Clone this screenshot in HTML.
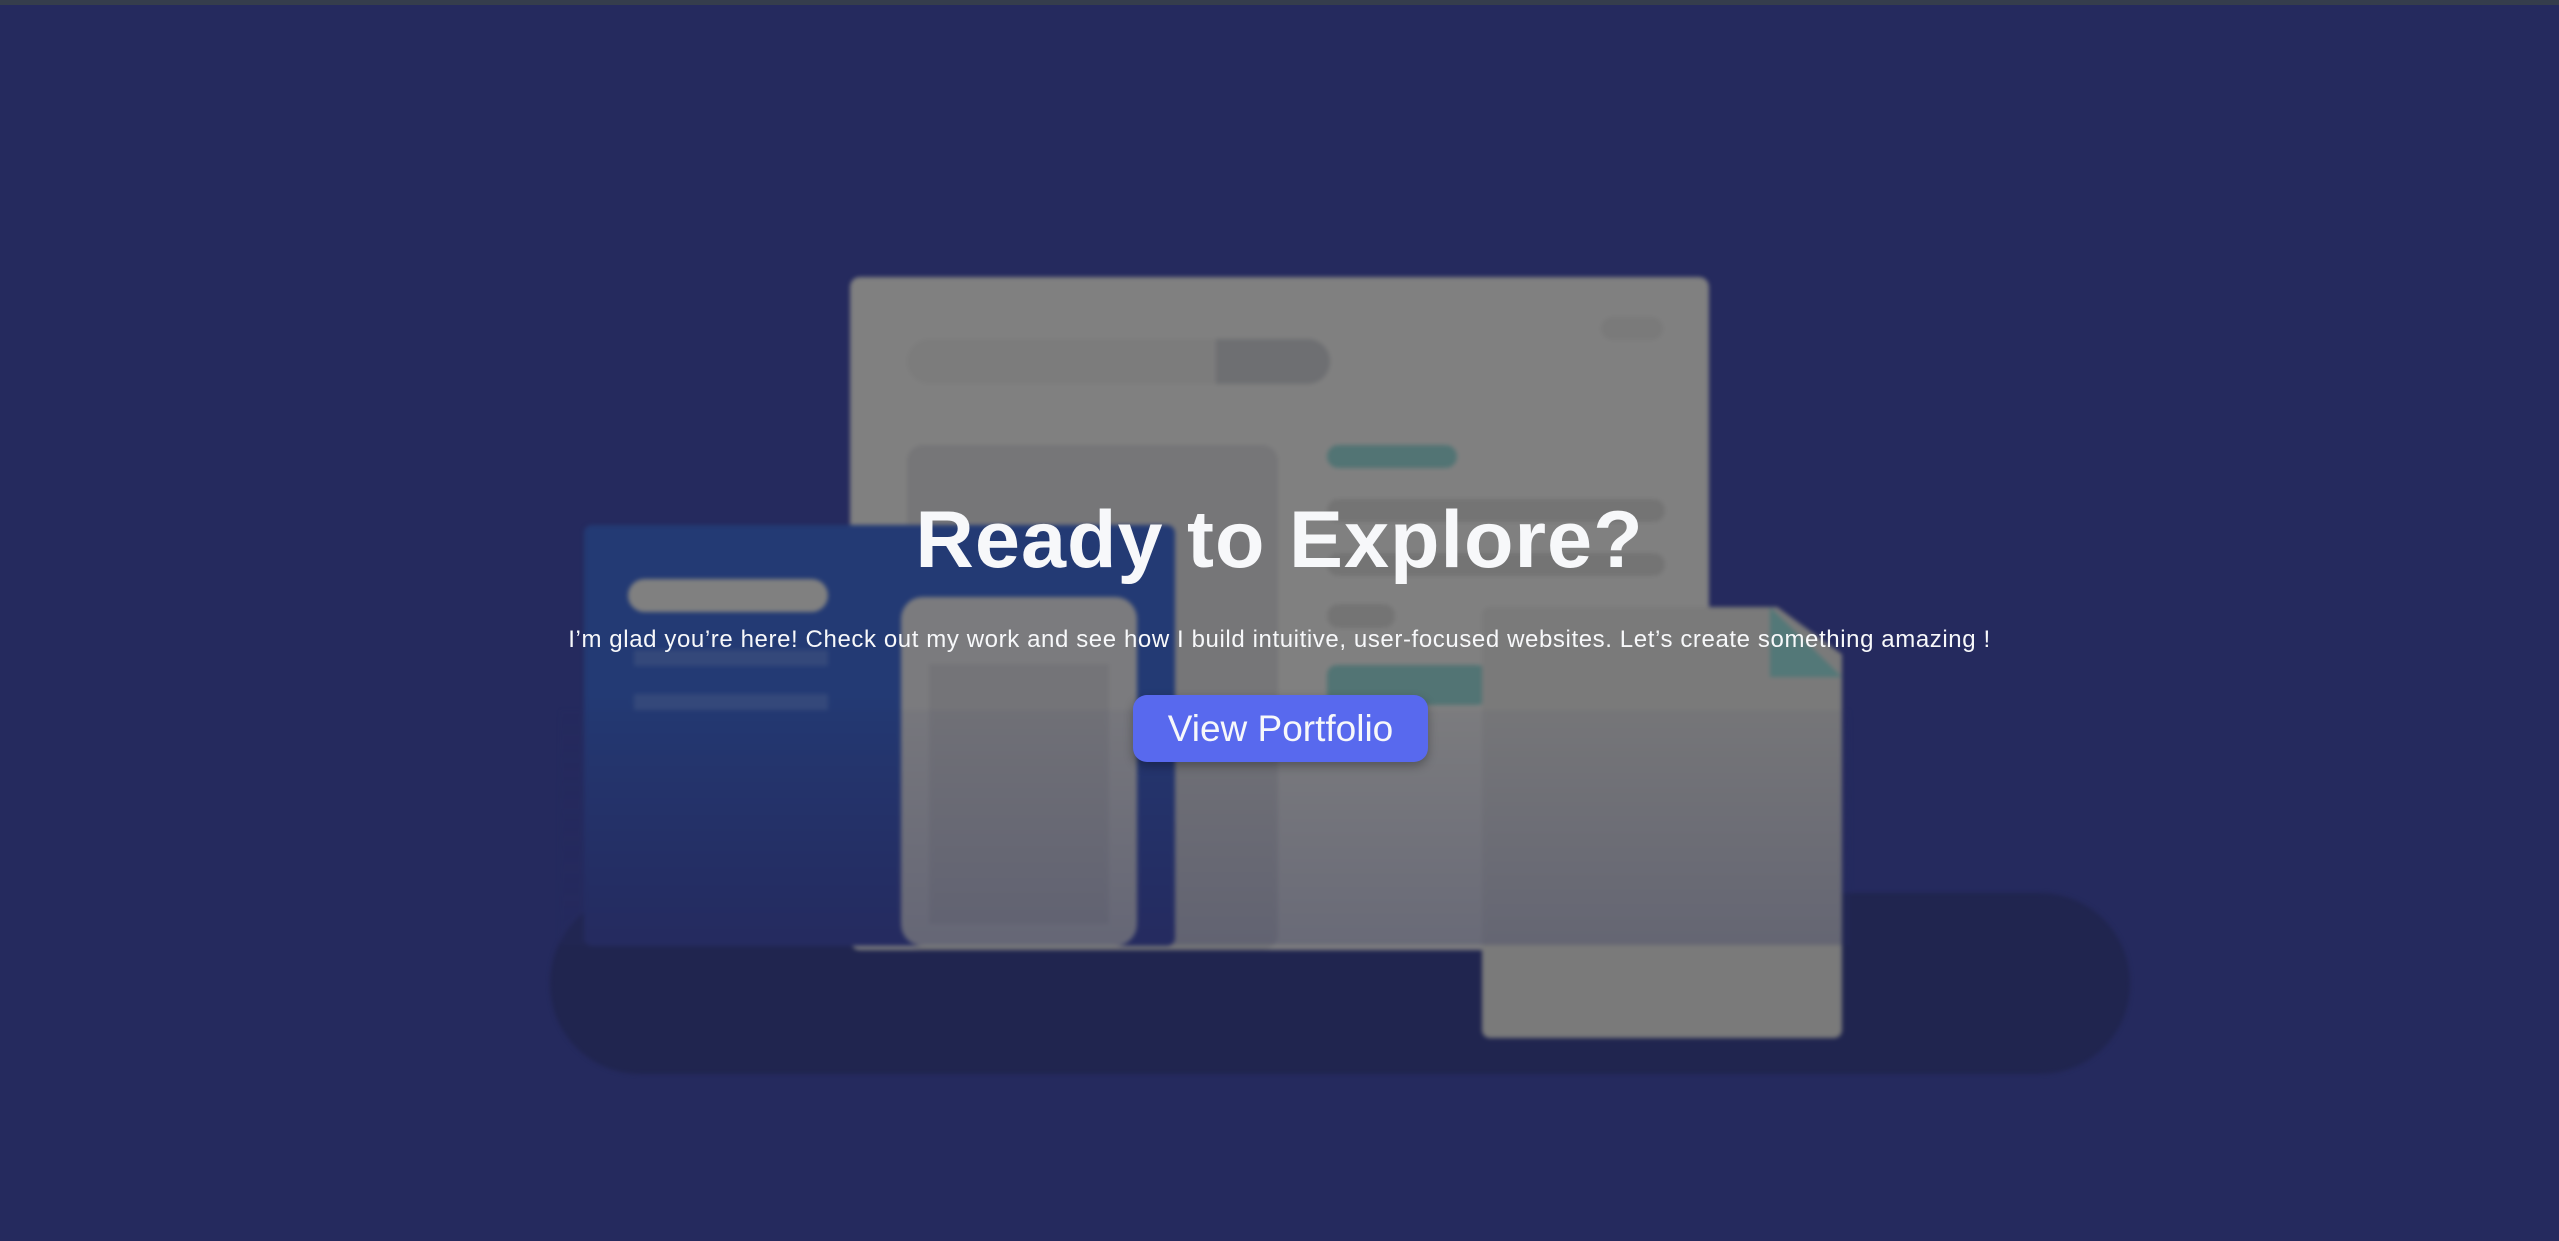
<!DOCTYPE html>
<html><head><meta charset="utf-8"><style>
html,body{margin:0;padding:0}
body{width:2559px;height:1241px;background:#252a5e;position:relative;overflow:hidden;font-family:"Liberation Sans",sans-serif}
.top{position:absolute;left:0;top:0;width:100%;height:5px;background:#353d4c}
.ill{position:absolute;left:0;top:0;width:100%;height:100%;filter:blur(2px)}
.a{position:absolute}
.txt{position:absolute;left:0;width:100%;text-align:center;color:#f7f8fa}
</style></head><body>
<div class="top"></div>
<div class="ill">
 <div class="a" style="left:550px;top:893px;width:1580px;height:181px;border-radius:90px;background:#20254f"></div>
 <div class="a" style="left:850px;top:277px;width:859px;height:673px;border-radius:10px;background:#808080"></div>
 <div class="a" style="left:907px;top:339px;width:423px;height:45px;border-radius:23px;background:#7c7c7c;overflow:hidden"><div style="position:absolute;right:0;top:0;width:114px;height:45px;background:#6e6f72"></div></div>
 <div class="a" style="left:1601px;top:317px;width:62px;height:23px;border-radius:12px;background:#7a7a7a"></div>
 <div class="a" style="left:907px;top:445px;width:371px;height:505px;border-radius:16px;background:#767678"></div>
 <div class="a" style="left:1327px;top:445px;width:130px;height:23px;border-radius:12px;background:#527474"></div>
 <div class="a" style="left:1327px;top:499px;width:338px;height:23px;border-radius:12px;background:#747474"></div>
 <div class="a" style="left:1327px;top:553px;width:338px;height:23px;border-radius:12px;background:#747474"></div>
 <div class="a" style="left:1327px;top:604px;width:68px;height:24px;border-radius:12px;background:#747474"></div>
 <div class="a" style="left:1327px;top:665px;width:160px;height:40px;border-radius:10px;background:#527474"></div>
 <div class="a" style="left:584px;top:525px;width:591px;height:421px;border-radius:8px;background:linear-gradient(#233a74 0%,#233a74 40%,#252b60 100%)"></div>
 <div class="a" style="left:628px;top:579px;width:200px;height:33px;border-radius:17px;background:#808080"></div>
 <div class="a" style="left:634px;top:650px;width:194px;height:16px;background:#34487a"></div>
 <div class="a" style="left:634px;top:694px;width:194px;height:16px;background:#34487a"></div>
 <div class="a" style="left:901px;top:597px;width:236px;height:349px;border-radius:22px;background:#7b7b7e"></div>
 <div class="a" style="left:929px;top:664px;width:180px;height:260px;background:#747478"></div>
 <div class="a" style="left:1482px;top:607px;width:360px;height:431px;border-radius:8px;background:#7a7a7a;clip-path:polygon(0 0,82% 0,100% 11%,100% 100%,0 100%)"></div>
 <div class="a" style="left:1770px;top:607px;width:72px;height:70px;background:#537878;clip-path:polygon(0 0,100% 100%,0 100%)"></div>
 <div class="a" style="left:560px;top:710px;width:1290px;height:235px;background:linear-gradient(rgba(37,42,94,0.05) 0%,rgba(37,42,94,0.25) 100%)"></div>
</div>
<div class="txt" style="top:490px;font-size:81px;font-weight:bold;letter-spacing:1px;line-height:100px">Ready to Explore?</div>
<div class="txt" style="top:624px;font-size:24px;line-height:32px;letter-spacing:0.6px">I’m glad you’re here! Check out my work and see how I build intuitive, user-focused websites. Let’s create something amazing !</div>
<div class="a" style="left:1133px;top:695px;width:295px;height:67px;border-radius:14px;background:#5869ee;box-shadow:0 4px 10px rgba(0,0,0,0.3);color:#f7f8fa;font-size:37px;line-height:67px;text-align:center">View Portfolio</div>
</body></html>
